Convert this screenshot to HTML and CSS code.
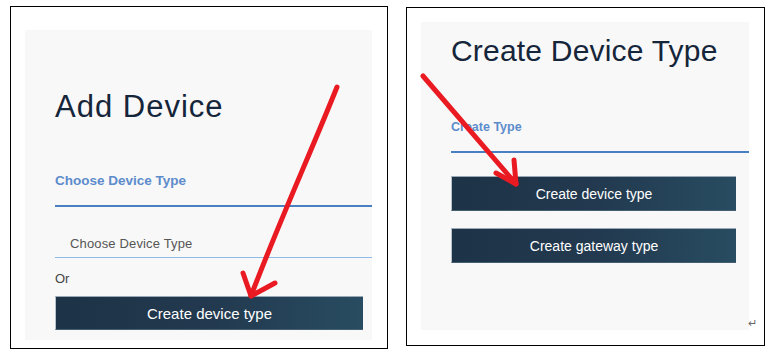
FILE: index.html
```html
<!DOCTYPE html>
<html lang="en">
<head>
  <meta charset="UTF-8">
  <meta name="viewport" content="width=device-width, initial-scale=1.0">
  <title>Add Device / Create Device Type</title>
  <link rel="stylesheet" href="styles.css">
</head>
<body>
  <!-- Capture 1 : Add Device -->
  <div class="shot shot-left">
    <div class="panel panel-left">
      <h1 class="title title-wide">Add Device</h1>
      <div class="field-label label-left">Choose Device Type</div>
      <input class="type-input" type="text" placeholder="Choose Device Type">
      <div class="or">Or</div>
      <button class="btn btn-left">Create device type</button>
    </div>
    <svg class="arrow" width="378" height="343" viewBox="0 0 378 343">
      <path d="M326 80 C 300 145, 268 215, 240 289" />
      <path d="M232 266 L 240 289 L 264 276" />
    </svg>
  </div>

  <!-- Capture 2 : Create Device Type -->
  <div class="shot shot-right">
    <div class="panel panel-right">
      <h1 class="title">Create Device Type</h1>
      <div class="field-label label-right">Create Type</div>
      <div class="btn-list">
        <button class="btn btn-right">Create device type</button>
        <button class="btn btn-right">Create gateway type</button>
      </div>
    </div>
    <svg class="arrow" width="359" height="339" viewBox="0 0 359 339">
      <path d="M16 68 L 109 176" />
      <path d="M107 152 L 109 176 L 89 165" />
    </svg>
    <span class="return-mark">↵</span>
  </div>
</body>
</html>
```

FILE: styles.css
```css
body { margin: 0; padding: 6px 0 0 10px; background-color: #fff; font-family: "Liberation Sans", Arial, sans-serif; display: flex; align-items: flex-start; gap: 18px; }

.shot { position: relative; box-sizing: border-box; border: 1px solid #000; background-color: #fff; }
.shot-left { width: 378px; height: 343px; padding: 23px 0 0 14px; }
.shot-right { width: 359px; height: 339px; margin-top: 1px; padding: 14px 0 0 14px; }

.panel { box-sizing: border-box; background-color: #f8f8f8; padding-left: 30px; display: flex; flex-direction: column; }
.panel-left { width: 347px; height: 310px; }
.panel-right { width: 328px; height: 308px; }

.title { margin: 0; font-size: 30px; line-height: 36px; font-weight: normal; color: #15253a; }
.title-wide { font-size: 31px; letter-spacing: 1px; margin-top: 59px; }
.panel-right .title { margin-top: 11px; letter-spacing: 0.2px; }

.field-label { font-weight: bold; color: #5d8ccc; border-bottom: 2px solid #4a7fc4; }
.label-left { font-size: 13.5px; line-height: 16px; margin-top: 48px; padding-bottom: 16px; }
.label-right { font-size: 12.5px; line-height: 16px; margin-top: 50px; padding-bottom: 16px; }

.type-input { box-sizing: border-box; width: 100%; height: 31px; margin-top: 20px; padding: 2px 0 0 15px; border: none; border-bottom: 1px solid #8fb9e6; background: transparent; font-family: "Liberation Sans", Arial, sans-serif; font-size: 13px; letter-spacing: 0.15px; outline: none; }
.type-input::placeholder { color: #555; }

.or { font-size: 13px; line-height: 16px; color: #444; margin-top: 13px; }

.btn { box-sizing: border-box; display: block; border: none; border-top: 1px solid #9aa9b5; border-left: 1px solid #b7c2ca; border-bottom: 1px solid #445f72; background: linear-gradient(90deg, #1d3347 0%, #22394f 50%, #284c61 100%); color: #fff; font-family: "Liberation Sans", Arial, sans-serif; padding: 0; cursor: pointer; }
.btn-left { width: 308px; height: 34px; margin-top: 9px; font-size: 15px; }
.btn-list { display: flex; flex-direction: column; gap: 17px; margin-top: 23px; }
.btn-right { width: 285px; height: 35px; font-size: 14px; }

.arrow { position: absolute; left: 0; top: 0; pointer-events: none; fill: none; stroke: #ea1a22; stroke-width: 5; stroke-linecap: round; stroke-linejoin: round; }

.return-mark { position: absolute; left: 341px; top: 309px; font-size: 11px; line-height: 12px; color: #666; }
```
